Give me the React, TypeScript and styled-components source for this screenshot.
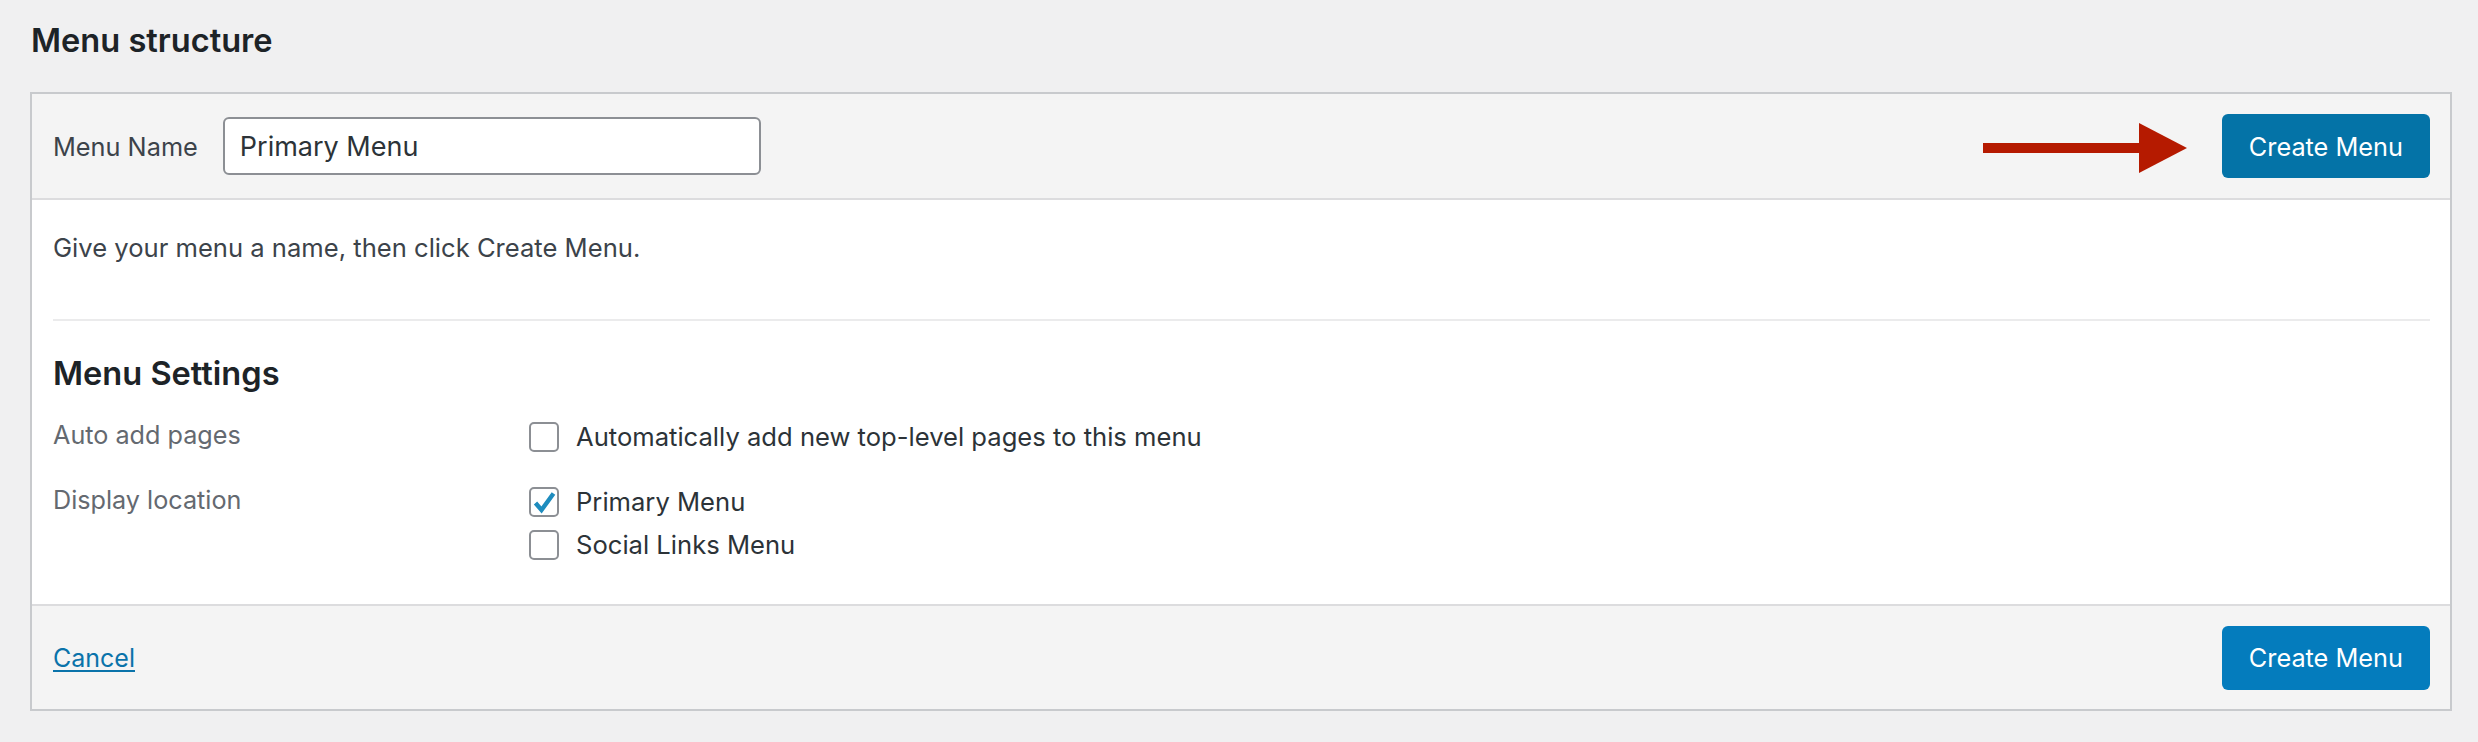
import React from 'react';
import styled, { createGlobalStyle } from 'styled-components';

const GlobalStyle = createGlobalStyle`
  html, body { margin: 0; padding: 0; background: #f0f0f1; }
  body { font-family: Inter, "Noto Sans", sans-serif; -webkit-font-smoothing: antialiased; }
  * { box-sizing: border-box; }
`;

const Page = styled.div`
  padding: 20px 26px 0 30px;
`;

const Title = styled.h2`
  margin: 0 0 32px 1px;
  font-size: 32.6px;
  line-height: 40px;
  font-weight: 600;
  color: #1d2327;
`;

const Panel = styled.div`
  border: 2px solid #c8cacd;
  background: #fff;
`;

const Bar = styled.div<{ $position: 'top' | 'bottom' }>`
  display: flex;
  align-items: center;
  height: ${(p) => (p.$position === 'top' ? 106 : 105)}px;
  padding: 0 20px 0 21px;
  background: #f4f4f4;
  ${(p) =>
    p.$position === 'top'
      ? 'border-bottom: 2px solid #dcdcde;'
      : 'border-top: 2px solid #dcdcde;'}
`;

const NameLabel = styled.label`
  font-size: 25.3px;
  color: #3c434a;
  margin-right: 25px;
`;

const NameInput = styled.input`
  width: 538px;
  height: 58px;
  border: 2px solid #8c8f94;
  border-radius: 6px;
  padding: 0 15px;
  font-family: inherit;
  font-size: 27px;
  color: #2c3338;
  background: #fff;
  outline: none;
`;

const Spacer = styled.div`
  flex: 1;
`;

const Arrow = styled.svg`
  display: block;
  margin-right: 35px;
  transform: translateY(2px);
`;

const PrimaryButton = styled.button<{ $dark?: boolean }>`
  height: 64px;
  padding: 0 27px;
  border: none;
  border-radius: 6px;
  background: ${(p) => (p.$dark ? '#0473a7' : '#047cbd')};
  color: #fff;
  font-family: inherit;
  font-size: 25.3px;
  cursor: pointer;
`;

const Body = styled.div`
  padding: 28px 20px 44px 21px;
`;

const Description = styled.p`
  margin: 0;
  font-size: 25.6px;
  line-height: 40px;
  color: #3c434a;
`;

const Divider = styled.hr`
  margin: 51px 0 32px;
  border: 0;
  height: 2px;
  background: #ebebec;
`;

const SectionTitle = styled.h3`
  margin: 0 0 29px;
  font-size: 32.6px;
  line-height: 40px;
  font-weight: 600;
  color: #1d2327;
`;

const SettingsGrid = styled.div`
  display: grid;
  grid-template-columns: 476px 1fr;
  row-gap: 35px;
`;

const SettingLabel = styled.div`
  font-size: 25.2px;
  line-height: 26px;
  color: #646970;
`;

const Options = styled.div`
  display: flex;
  flex-direction: column;
  gap: 13px;
`;

const Option = styled.label`
  display: flex;
  align-items: center;
  gap: 17px;
  font-size: 25.6px;
  line-height: 30px;
  color: #2c3338;
`;

const Box = styled.span`
  display: flex;
  align-items: center;
  justify-content: center;
  width: 30px;
  height: 30px;
  border: 2px solid #8c8f94;
  border-radius: 5px;
  background: #fff;
  flex: none;
`;

const CancelLink = styled.a`
  font-size: 25px;
  color: #0a73aa;
  text-decoration: underline;
  text-decoration-thickness: 2px;
  text-underline-offset: 3px;
  cursor: pointer;
`;

const Checkbox = ({ checked }: { checked?: boolean }) => (
  <Box>
    {checked && (
      <svg width="26" height="26" viewBox="0 0 26 26">
        <polyline
          points="4.5,14 10.5,21 22.5,4.5"
          fill="none"
          stroke="#1e8cbe"
          strokeWidth="4.4"
          strokeLinejoin="miter"
        />
      </svg>
    )}
  </Box>
);

export default function App() {
  return (
    <>
      <GlobalStyle />
      <Page>
        <Title>Menu structure</Title>
        <Panel>
          <Bar $position="top">
            <NameLabel htmlFor="menu-name">Menu Name</NameLabel>
            <NameInput id="menu-name" defaultValue="Primary Menu" />
            <Spacer />
            <Arrow width="204" height="50" viewBox="0 0 204 50">
              <rect x="0" y="20" width="158" height="10" fill="#b51a00" />
              <polygon points="156,0 204,25 156,50" fill="#b51a00" />
            </Arrow>
            <PrimaryButton $dark>Create Menu</PrimaryButton>
          </Bar>
          <Body>
            <Description>Give your menu a name, then click Create Menu.</Description>
            <Divider />
            <SectionTitle>Menu Settings</SectionTitle>
            <SettingsGrid>
              <SettingLabel>Auto add pages</SettingLabel>
              <Options>
                <Option>
                  <Checkbox />
                  Automatically add new top-level pages to this menu
                </Option>
              </Options>
              <SettingLabel>Display location</SettingLabel>
              <Options>
                <Option>
                  <Checkbox checked />
                  Primary Menu
                </Option>
                <Option>
                  <Checkbox />
                  Social Links Menu
                </Option>
              </Options>
            </SettingsGrid>
          </Body>
          <Bar $position="bottom">
            <CancelLink>Cancel</CancelLink>
            <Spacer />
            <PrimaryButton>Create Menu</PrimaryButton>
          </Bar>
        </Panel>
      </Page>
    </>
  );
}
